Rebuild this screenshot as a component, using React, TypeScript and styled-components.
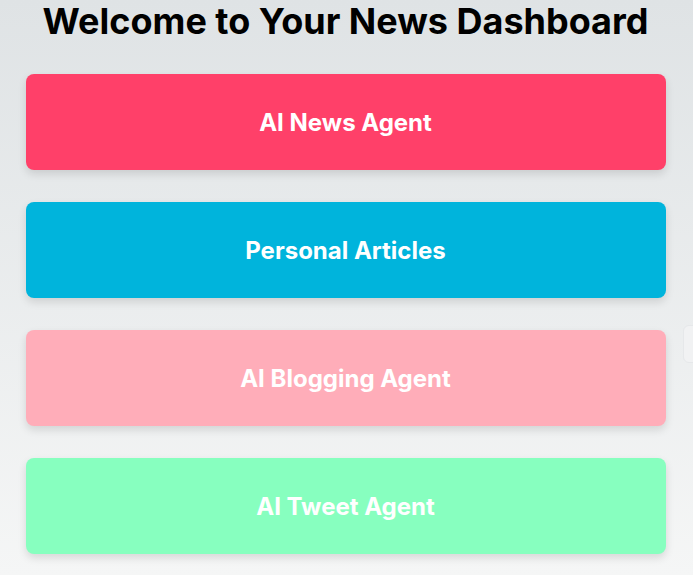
import React from "react";
import styled, { createGlobalStyle } from "styled-components";

const GlobalStyle = createGlobalStyle`
  html, body {
    margin: 0;
    padding: 0;
    height: 100%;
  }
  body {
    font-family: Inter, "Noto Sans", sans-serif;
    background: linear-gradient(180deg, #dfe3e5 0%, #f5f6f6 100%);
    min-height: 575px;
    overflow: hidden;
  }
`;

const Page = styled.main`
  position: relative;
  min-height: 575px;
  display: flex;
  flex-direction: column;
  align-items: center;
  padding: 3px 27px 0 25px;
  box-sizing: border-box;
`;

const Title = styled.h1`
  margin: 0 0 35px;
  font-size: 36px;
  line-height: 1;
  font-weight: 700;
  color: #000;
  text-align: center;
`;

const List = styled.nav`
  width: 100%;
  max-width: 640px;
  display: flex;
  flex-direction: column;
  gap: 32px;
`;

const Card = styled.button<{ $bg: string }>`
  height: 96px;
  width: 100%;
  border: none;
  border-radius: 8px;
  background: ${(p) => p.$bg};
  color: #fff;
  font-family: Inter, "Noto Sans", sans-serif;
  font-size: 24px;
  font-weight: 700;
  display: flex;
  align-items: center;
  justify-content: center;
  box-shadow: 0 4px 8px rgba(0, 0, 0, 0.12);
  cursor: pointer;
`;

const EdgeWidget = styled.div`
  position: absolute;
  left: 683px;
  top: 325px;
  width: 30px;
  height: 36px;
  border: 1px solid #e6e8ea;
  border-radius: 6px;
  background: #f1f2f3;
`;

const items = [
  { label: "AI News Agent", bg: "#ff4069" },
  { label: "Personal Articles", bg: "#00b4dc" },
  { label: "AI Blogging Agent", bg: "#ffadb9" },
  { label: "AI Tweet Agent", bg: "#87ffbf" },
];

export default function App() {
  return (
    <>
      <GlobalStyle />
      <Page>
        <Title>Welcome to Your News Dashboard</Title>
        <List>
          {items.map((it) => (
            <Card key={it.label} $bg={it.bg}>
              {it.label}
            </Card>
          ))}
        </List>
        <EdgeWidget />
      </Page>
    </>
  );
}
